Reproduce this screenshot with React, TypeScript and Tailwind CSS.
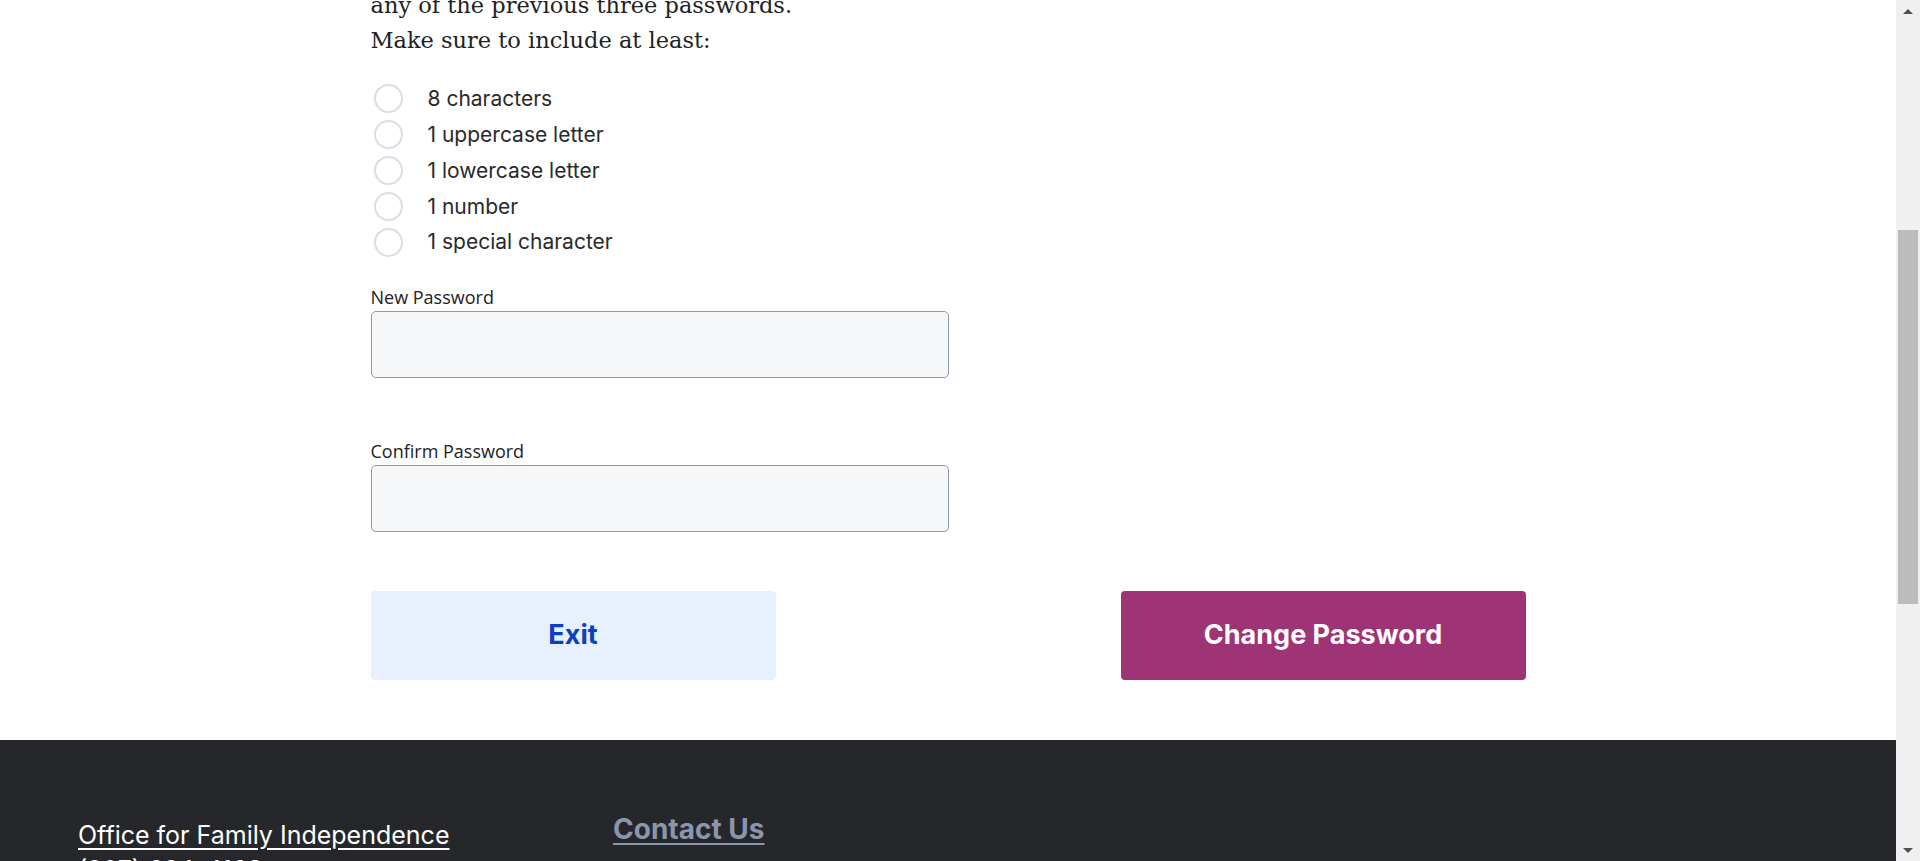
import React from 'react';

const rules = ['8 characters', '1 uppercase letter', '1 lowercase letter', '1 number', '1 special character'];

function Field({ label }: { label: string }) {
  return (
    <div className="flex flex-col">
      <label className="text-[18px] leading-[22px] text-[#222] font-['Open_Sans',sans-serif]">{label}</label>
      <input
        type="password"
        className="mt-[3px] h-[67px] w-[578px] rounded-[5px] border border-[#8e98ab] bg-[#f6f7f9] px-3 outline-none"
      />
    </div>
  );
}

function Scrollbar() {
  return (
    <div className="flex h-full w-[24px] shrink-0 flex-col items-center bg-[#f0f0f0]">
      <div className="flex h-[22px] w-full items-center justify-center">
        <div className="h-0 w-0 border-x-[5px] border-b-[5px] border-x-transparent border-b-[#505050]" />
      </div>
      <div className="h-[208px]" />
      <div className="h-[374px] w-[20px] bg-[#bcbcbc]" />
      <div className="flex-1" />
      <div className="flex h-[22px] w-full items-center justify-center">
        <div className="h-0 w-0 border-x-[5px] border-t-[5px] border-x-transparent border-t-[#505050]" />
      </div>
    </div>
  );
}

export default function App() {
  return (
    <div className="flex h-screen w-full overflow-hidden bg-white">
      <div className="flex min-w-0 flex-1 flex-col">
        <main className="mx-auto w-[1155px] pb-[60px]">
          <p className="mt-[-47px] text-[22.5px] leading-[35px] text-[#222] font-['DejaVu_Serif',serif]">
            Your new password cannot be the same as
            <br />
            any of the previous three passwords.
            <br />
            Make sure to include at least:
          </p>

          <ul className="mt-[23px] flex flex-col">
            {rules.map(r => (
              <li key={r} className="flex h-[35.8px] items-center">
                <span className="ml-[3px] h-[29px] w-[29px] rounded-full border-2 border-[#dadde4]" />
                <span className="ml-[25px] text-[21px] text-[#2a2a2a] font-['Inter',sans-serif]">{r}</span>
              </li>
            ))}
          </ul>

          <div className="mt-[26px] flex flex-col gap-[62px]">
            <Field label="New Password" />
            <Field label="Confirm Password" />
          </div>

          <div className="mt-[59px] flex justify-between">
            <button className="h-[89px] w-[405px] rounded-[4px] bg-[#e6f1fd] text-[27px] font-bold text-[#0b3fc4] font-['Inter',sans-serif]">
              Exit
            </button>
            <button className="h-[89px] w-[405px] rounded-[4px] bg-[#9e3376] text-[27px] font-bold text-white font-['Inter',sans-serif]">
              Change Password
            </button>
          </div>
        </main>

        <footer className="flex-1 bg-[#26272a] font-['Inter',sans-serif]">
          <div className="flex pl-[78px] pt-[78px]">
            <div className="w-[535px]">
              <a href="#" className="text-[25px] leading-[35px] text-white underline underline-offset-[4px]">
                Office for Family Independence
              </a>
              <p className="text-[25px] leading-[35px] text-white">(207) 624-4168</p>
            </div>
            <div className="mt-[-6px]">
              <a href="#" className="text-[28px] font-bold leading-[35px] text-[#8b95ab] underline decoration-2 underline-offset-[4px]">
                Contact Us
              </a>
            </div>
          </div>
        </footer>
      </div>
      <Scrollbar />
    </div>
  );
}
